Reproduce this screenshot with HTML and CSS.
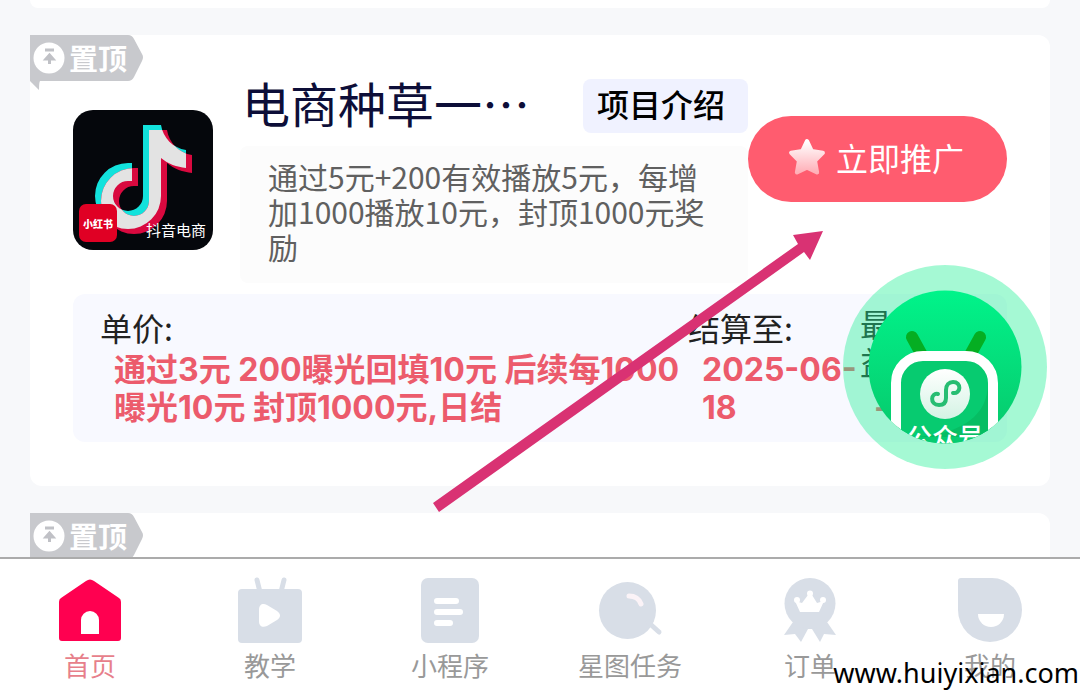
FILE: index.html
```html
<!DOCTYPE html>
<html lang="zh-CN">
<head>
<meta charset="utf-8">
<meta name="viewport" content="width=device-width, initial-scale=1">
<title>电商种草</title>
<link rel="stylesheet" href="styles.css">
</head>
<body>
<svg class="defs" aria-hidden="true">
  <defs>
    <symbol id="pin" viewBox="0 0 114 56">
      <path d="M0 0H98Q102 0 104 4L112 19Q114 22 112 26L104 42Q102 46 98 46H10Q9 47 9 55L0 46Z" fill="#c8c9cd"/>
      <circle cx="19" cy="23" r="15.500" fill="#fff"/>
      <path d="M15 15H24M19.500 29V23M16 24L19.500 20L23 24Z" fill="#c0c1c6" stroke="#c0c1c6" stroke-width="3"/>
      <text x="39" y="35" class="pin-text">置顶</text>
    </symbol>
  </defs>
</svg>
<main class="feed">
  <div class="card card-prev"></div>
  <article class="card card-main">
    <svg class="pin" role="img" aria-label="置顶"><use href="#pin"/></svg>
    <header class="head">
      <svg class="logo" viewBox="0 0 140 140" role="img" aria-label="抖音电商">
        <defs>
          <path id="note" d="M70 15H88C90 28 100 38 113 40V58C104 57 95 54 88 48V86A33 33 0 1 1 55 53H59V71H55A15 15 0 1 0 70 86Z"/>
          <clipPath id="note-clip"><use href="#note"/></clipPath>
        </defs>
        <rect width="140" height="140" rx="20" fill="#05070c"/>
        <use href="#note" fill="#12e2dc"/>
        <use href="#note" fill="#d9093f" transform="translate(6 5)"/>
        <g clip-path="url(#note-clip)"><use href="#note" fill="#e3e3e3" transform="translate(6 5)"/></g>
        <rect x="6" y="94" width="38" height="38" rx="7" fill="#e00024"/>
        <text x="25" y="118" text-anchor="middle" class="logo-mini">小红书</text>
        <text x="73" y="126" class="logo-name">抖音电商</text>
      </svg>
      <div class="info">
        <div class="title-row">
          <h1 class="title">电商种草一…</h1>
          <button class="tag" type="button">项目介绍</button>
        </div>
        <p class="desc">通过5元+200有效播放5元，每增加1000播放10元，封顶1000元奖励</p>
      </div>
      <button class="promote" type="button">
        <svg class="star" viewBox="0 0 36 36" aria-hidden="true">
          <defs><linearGradient id="sg" x1="0" y1="0" x2="0" y2="1"><stop offset="0" stop-color="#fff"/><stop offset="1" stop-color="#ffb0b8"/></linearGradient></defs>
          <path d="M18 3L22.500 12.500L33 14L25.500 21.500L27.500 32.500L18 28L8.500 32.500L10.500 21.500L3 14L13.500 12.500Z" fill="url(#sg)" stroke="url(#sg)" stroke-width="4" stroke-linejoin="round"/>
        </svg>
        立即推广
      </button>
    </header>
    <dl class="stats">
      <div class="stat stat-price"><dt>单价:</dt><dd>通过3元 200曝光回填10元 后续每1000曝光10元 封顶1000元,日结</dd></div>
      <div class="stat stat-date"><dt>结算至:</dt><dd>2025-06-18</dd></div>
      <div class="stat stat-top"><dt>最高收益:</dt><dd>--</dd></div>
    </dl>
    <svg class="arrow" viewBox="0 0 391 283" aria-hidden="true">
      <path d="M0 272L365 13L360 4L390 0L377 29L371 21L6 281Z" fill="#d93273"/>
    </svg>
  </article>
  <div class="card card-next">
    <svg class="pin" role="img" aria-label="置顶"><use href="#pin"/></svg>
  </div>
</main>
<a class="follow" href="#follow" aria-label="公众号">
  <svg viewBox="0 0 204 204" aria-hidden="true">
    <defs>
      <linearGradient id="fg" x1="0" y1="0" x2="0" y2="1"><stop offset="0" stop-color="#00f48a"/><stop offset=".45" stop-color="#04df7c"/><stop offset="1" stop-color="#06c76a"/></linearGradient>
      <linearGradient id="wg" x1="0" y1="0" x2="0" y2="1"><stop offset="0" stop-color="#fff"/><stop offset="1" stop-color="#d4f3e4"/></linearGradient>
      <clipPath id="fc"><circle cx="102" cy="102" r="76.500"/></clipPath>
    </defs>
    <circle cx="102" cy="102" r="102" fill="#1ef094" fill-opacity=".4"/>
    <g clip-path="url(#fc)">
      <rect x="25" y="25" width="154" height="154" fill="url(#fg)"/>
      <path d="M69 72L80 92M137 72L126 92" stroke="#05ae22" stroke-width="12" stroke-linecap="round"/>
      <rect x="53" y="91" width="97" height="120" rx="27" fill="#07cb70" stroke="#fff" stroke-width="10"/>
      <path d="M145 118C145 150 120 168 75 172H145Z" fill="#06bd63"/>
      <circle cx="102" cy="129" r="25" fill="url(#wg)"/>
      <path d="M95 129C88 127 86 140 96 140C101 140 103 137 103 133V125C103 120 106 117 110 117C119 117 118 129 110 128" fill="none" stroke="#27bd72" stroke-width="4" stroke-linecap="round"/>
      <text x="102" y="182" text-anchor="middle" class="follow-text">公众号</text>
    </g>
  </svg>
</a>
<nav class="tabs">
  <a class="tab active" href="#home">
    <svg viewBox="0 0 64 64" aria-hidden="true"><path fill-rule="evenodd" d="M28 3Q32 0 36 3L61 20Q63 21 63 24V60Q63 63 60 63H4Q1 63 1 60V24Q1 21 3 20ZM23 56H41V42A9 9 0 0 0 23 42Z"/></svg>
    首页
  </a>
  <a class="tab" href="#learn">
    <svg viewBox="0 0 64 64" aria-hidden="true"><path d="M19 2L22 14M46 2L43 14" stroke="currentColor" stroke-width="5" stroke-linecap="round"/><rect y="11" width="64" height="54" rx="4"/><path class="hole" d="M21 32C21 26 25 25 29 27L39 33C43 36 43 39 39 42L29 48C24 50 21 48 21 43Z"/></svg>
    教学
  </a>
  <a class="tab" href="#apps">
    <svg viewBox="0 0 64 64" aria-hidden="true"><rect x="3" width="58" height="65" rx="7"/><path d="M19 23H38M19 34H42M19 45H32" stroke="#fff" stroke-width="6" stroke-linecap="round"/></svg>
    小程序
  </a>
  <a class="tab" href="#tasks">
    <svg viewBox="0 0 64 64" aria-hidden="true"><circle cx="29.500" cy="32.500" r="28.500"/><path d="M50 44L61 54" stroke="currentColor" stroke-width="5" stroke-linecap="round"/><path d="M31 18Q40 18 43 26" fill="none" stroke="#fbf3f7" stroke-width="5" stroke-linecap="round"/></svg>
    星图任务
  </a>
  <a class="tab" href="#orders">
    <svg viewBox="0 0 64 64" aria-hidden="true"><path d="M15 44L6 57L17 56L23 64L30 51H34L42 64L46 56L58 57L49 44Z"/><circle cx="32" cy="25.500" r="25.500"/><path class="hole" d="M22 34L17 23L24 25L30 17H34L39 25L46 23L41 34Z"/><circle class="hole" cx="19" cy="22" r="3"/><circle class="hole" cx="32" cy="15.500" r="3"/><circle class="hole" cx="45" cy="22" r="3"/></svg>
    订单
  </a>
  <a class="tab" href="#mine">
    <svg viewBox="0 0 64 64" aria-hidden="true"><path d="M3 0H34A30 32 0 0 1 64 32A32 32 0 0 1 0 32V3Q0 0 3 0Z"/><path class="hole" d="M20 36H46A13 13 0 0 1 20 36Z"/></svg>
    我的
  </a>
</nav>
<div class="watermark">www.huiyixian.com</div>
</body>
</html>
```

FILE: styles.css
```css
* { box-sizing: border-box; }
body {
  position: relative;
  display: flex;
  flex-direction: column;
  height: 100vh;
  margin: 0;
  overflow: hidden;
  background: #f7f8fa;
  font-family: "Noto Sans CJK SC", sans-serif;
}
button { border: 0; font: inherit; }
.defs { position: absolute; width: 0; height: 0; }

.feed {
  display: flex;
  flex: 1;
  flex-direction: column;
  gap: 27px;
  min-height: 0;
  padding: 0 30px;
  overflow: hidden;
}
.card {
  position: relative;
  flex: none;
  border-radius: 12px;
  background: #fff;
}
.card-prev { height: 8px; border-radius: 0 0 12px 12px; }
.card-main { padding: 44px 43px; border-top-left-radius: 0; }
.card-next { height: 200px; border-top-left-radius: 0; }
.pin {
  position: absolute;
  top: 0;
  left: 0;
  width: 114px;
  height: 56px;
}
.pin-text { fill: #fff; font-size: 29px; font-weight: 700; }

.head { display: flex; align-items: flex-start; }
.logo { flex: none; width: 140px; margin: 31px 27px 0 0; }
.logo-mini { fill: #fff; font-size: 10px; font-weight: 900; }
.logo-name { fill: #fff; font-size: 15px; }
.info { flex: 1; min-width: 0; }
.title-row {
  display: flex;
  align-items: flex-start;
  justify-content: space-between;
  height: 54px;
  padding-left: 2px;
}
.title {
  margin: 0;
  color: #0d0e38;
  font-size: 48px;
  font-weight: 400;
  line-height: 46px;
  white-space: nowrap;
}
.tag {
  height: 54px;
  padding: 0 23px 6px 14px;
  border-radius: 8px;
  background: #f0f2ff;
  color: #000;
  font-size: 32px;
  font-weight: 500;
  line-height: 48px;
  white-space: nowrap;
}
.desc {
  margin: 13px 0 0;
  padding: 13px 28px 19px;
  border-radius: 8px;
  background: #fcfcfc;
  color: #606060;
  font-size: 30px;
  line-height: 35px;
}
.promote {
  display: flex;
  flex: none;
  align-items: center;
  gap: 10px;
  height: 86px;
  margin-top: 37px;
  padding: 0 43px 4px 40px;
  border-radius: 43px;
  background: #ff5c6f;
  color: #fff;
  font-size: 32px;
}
.star { width: 38px; height: 38px; }

.stats {
  display: flex;
  align-items: flex-end;
  margin: 11px 0 0;
  padding: 10px 27px 15px;
  border-radius: 12px;
  background: #f8f9ff;
  color: #222;
  font-size: 32px;
  line-height: 38px;
}
.stat dt { margin-bottom: 5px; }
.stat dd {
  margin: 0;
  padding-left: 14px;
  color: #ec5b6c;
  font-family: Inter, "Noto Sans CJK SC", sans-serif;
  font-weight: 700;
}
.stat-price { flex: 1; }
.stat-date { width: 172px; }
.stat-top { width: 120px; }
.stat-top dt { margin-bottom: 9px; }

.arrow {
  position: absolute;
  top: 196px;
  left: 403px;
  width: 391px;
  height: 283px;
}
.follow {
  position: absolute;
  top: 265px;
  right: 33px;
  width: 204px;
  height: 204px;
}
.follow svg { display: block; }
.follow-text { fill: #fff; font-size: 26px; font-weight: 500; }

.tabs {
  display: grid;
  flex: none;
  grid-template-columns: repeat(6, 1fr);
  height: 134px;
  border-top: 2px solid #ababab;
  background: #fff;
}
.tab {
  display: flex;
  flex-direction: column;
  align-items: center;
  gap: 4px;
  padding-top: 19px;
  color: #999;
  font-size: 26px;
  line-height: 38px;
  text-decoration: none;
}
.tab svg {
  width: 64px;
  height: 64px;
  overflow: visible;
  color: #d8dee7;
  fill: currentColor;
}
.tab .hole { fill: #fff; }
.active { color: #e77f8b; }
.active svg { color: #ff0050; }

.watermark {
  position: absolute;
  right: 1px;
  bottom: 0;
  color: #000;
  font-family: "Noto Sans", sans-serif;
  font-size: 27px;
  line-height: 36px;
}
```
